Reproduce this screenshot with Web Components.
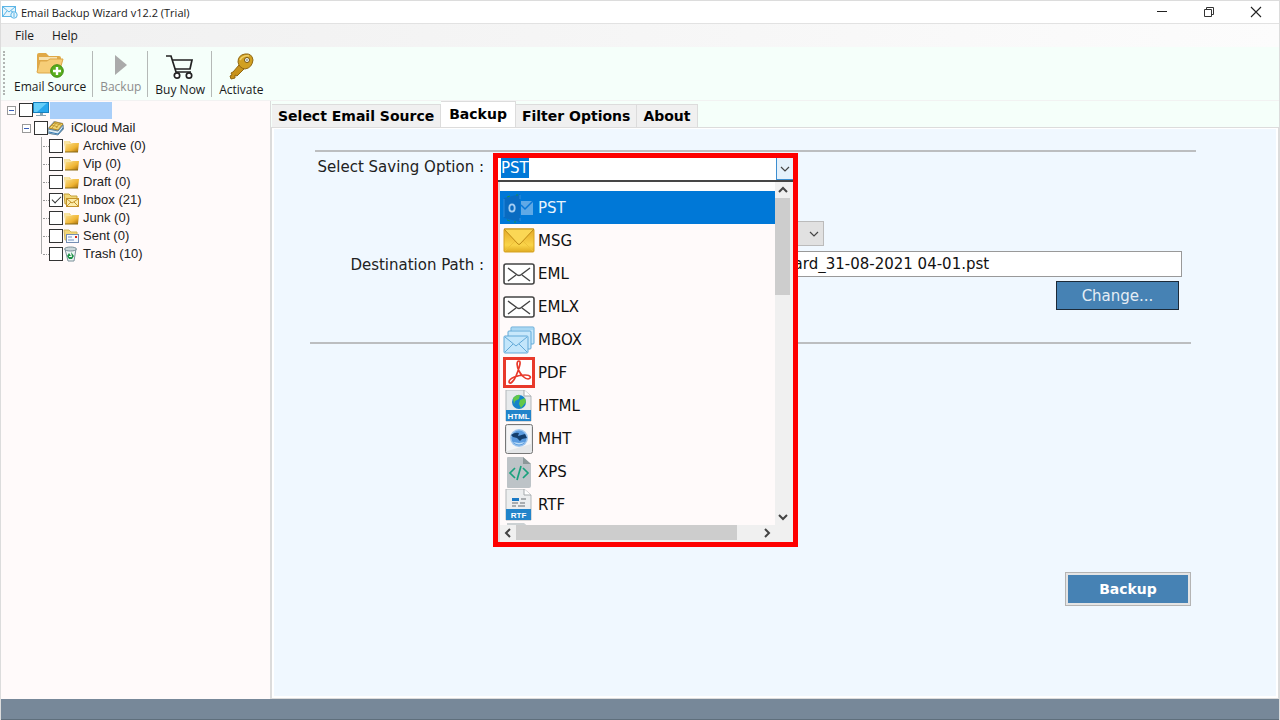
<!DOCTYPE html>
<html lang="en">
<head>
<meta charset="utf-8">
<title>Email Backup Wizard v12.2 (Trial)</title>
<style>
    body {
        margin: 0;
        font-family: "Open Sans", "Noto Sans", sans-serif;
        font-size: 12px;
        color: #1a1a1a;
    }
</style>
</head>
<body>
<backup-app></backup-app>

<script>
const envelope = `<rect x="1" y="6" width="30" height="20" rx="2" fill="#fff" stroke="#444" stroke-width="1.6"/>
    <path d="M5 10l8 6q3 3 6 0l8-6M5 23l8-6M27 23l-8-6" fill="none" stroke="#444" stroke-width="1.4"/>`;
const folder = `<path d="M1 3h5l2 2h7v9H3z" fill="#e9b63c"/><path d="M1 3h5l1 2h7v2L2 13z" fill="#f8e3a0"/>
    <path d="M2 14l1-8h5l2-1h6l-1 9z" fill="url(#fg)"/><path d="M2 14h13" stroke="#8b6a14"/>
    <defs><linearGradient id="fg" x1="0" y1="0" x2="1" y2="1"><stop offset="0" stop-color="#fbe08c"/><stop offset=".6" stop-color="#efb433"/><stop offset="1" stop-color="#a36c0c"/></linearGradient></defs>`;

const ICONS = {
    app: `<svg viewBox="0 0 16 14"><rect x=".5" y="1.5" width="13" height="10" fill="#e6f5fd" stroke="#5bb5e6"/><path d="M1 2l6 5 6-5M1 11l4-5M13 8L9 6" fill="none" stroke="#5bb5e6"/><circle cx="12" cy="10" r="3.2" fill="#e6f5fd" stroke="#5bb5e6"/><path d="M12 8v4" stroke="#5bb5e6"/></svg>`,
    source: `<svg viewBox="0 0 28 28"><path d="M1 4q0-2 2-2h7l3 3h10q2 0 2 2v15H3q-2 0-2-2z" fill="#e0a947"/><path d="M3 6h18v3H3z" fill="#f7e2af"/><path d="M1 21l3-11h7l3-2h13l-4 14H3q-2 0-2-1z" fill="#f6cd77" stroke="#dda748"/><circle cx="21" cy="20" r="6.3" fill="#58ad1c" stroke="#3f8d12"/><path d="M21 16v8M17 20h8" stroke="#fff" stroke-width="2.4"/></svg>`,
    play: `<svg viewBox="0 0 28 28"><path d="M8 4l12 10L8 24z" fill="#aaa"/></svg>`,
    cart: `<svg viewBox="0 0 28 28"><path d="M0 3h5l5 16h15" fill="none" stroke="#222" stroke-width="1.7"/><path d="M6 7h20l-2 9H9" fill="none" stroke="#222" stroke-width="1.7"/><circle cx="11" cy="22.5" r="2.7" fill="#fff" stroke="#222" stroke-width="1.7"/><circle cx="23" cy="22.5" r="2.7" fill="#fff" stroke="#222" stroke-width="1.7"/></svg>`,
    key: `<svg viewBox="0 0 28 28"><path d="M12 12l5 4-7 7-2-1v3l-4 1-1-3 2-1-1-2 2-1z" fill="#c8931b" stroke="#916711"/><path d="M11 9q0-7 7-8 7-1 8 6-1 8-8 9-6-1-7-7z" fill="#d1a021" stroke="#916711"/><path d="M13 7q3-5 9-4" fill="none" stroke="#efcf68" stroke-width="1.5"/><circle cx="20" cy="7" r="2.5" fill="#f5fffa" stroke="#76520c"/><circle cx="20" cy="7" r="1" fill="#999"/></svg>`,
    computer: `<svg viewBox="0 0 16 16"><rect x=".5" y=".5" width="15" height="10" fill="#2aa8ed" stroke="#1680be"/><path d="M1 1h13L4 10H1z" fill="#66cdf8"/><path d="M7 11h3v2H7zM3 13h10v1H3z" fill="#8aa4b2"/></svg>`,
    mail: `<svg viewBox="0 0 16 16"><path d="M0 8l6-7 9 2 1 6-6 6-9-1z" fill="#8b9696"/><path d="M1 8l6-6 8 2-5 6z" fill="#f2d675" stroke="#b58b24"/><path d="M4 5l6 2M6 3l7 2M9 2l-5 6M12 3L8 8" stroke="#c39c35" fill="none"/><path d="M0 9l10 2 5-6v4l-5 6-10-2z" fill="#dceaf2" stroke="#6387a0"/><path d="M1 12l9 2 5-6" fill="none" stroke="#3478b0"/></svg>`,
    folder: `<svg viewBox="0 0 16 16">${folder}</svg>`,
    inbox: `<svg viewBox="0 0 16 16"><path d="M1 2h5l2 2h6v8H2z" fill="#f2d777" stroke="#c5a13b"/><rect x="3.5" y="6.5" width="12" height="8" fill="#fcecaa" stroke="#c3912b"/><path d="M4 7l5 4 6-4M4 14l4-4M15 14l-4-4" fill="none" stroke="#c3912b"/></svg>`,
    sent: `<svg viewBox="0 0 16 16"><path d="M1 2h5l2 2h6v8H2z" fill="#f2d777" stroke="#d1b75d"/><rect x="3.5" y="6.5" width="12" height="8" fill="#f5faff" stroke="#758eb3"/><path d="M5 9h4M5 12h6" stroke="#7391c2"/><path d="M12 8h2v2h-2z" fill="#d52717"/></svg>`,
    trash: `<svg viewBox="0 0 16 16"><path d="M2 3h11l-2 12H5z" fill="#eff5f5" stroke="#7a9099"/><ellipse cx="7.5" cy="3" rx="6" ry="2" fill="#cbd7da" stroke="#7a9099"/><path d="M8 6l3 4-2 3H6l-2-3 2-3 2 3H6v1h3z" fill="#1e9245"/></svg>`,
    pst: `<svg viewBox="0 0 32 32"><path d="M1 6l16-4v28L1 26z" fill="#096bc1"/><path d="M4 5l3-1M13 3h2M4 28l3 1M11 30h2" stroke="#19934b"/><path d="M1 7v18M17 3v4M17 26v3" stroke="#2c8bdd"/><ellipse cx="9" cy="16" rx="2.7" ry="3.7" fill="none" stroke="#a4cdf2" stroke-width="1.8"/><path d="M18 9h12v14H18z" fill="#5fa9e6"/><path d="M18 13l4 4 8-8" fill="none" stroke="#0878d7" stroke-width="1.5"/></svg>`,
    msg: `<svg viewBox="0 0 32 32"><defs><linearGradient id="mg" x1="0" y1="0" x2="0" y2="1"><stop offset="0" stop-color="#e5a928"/><stop offset=".7" stop-color="#fad449"/><stop offset="1" stop-color="#e0ab21"/></linearGradient></defs><rect x="1" y="4" width="30" height="23" rx="1" fill="url(#mg)" stroke="#d7a321"/><path d="M2 26l10-10M30 26L20 16" stroke="#eec13a"/><path d="M1 4h30L17 19q-1 1-2 0z" fill="#fbd755" stroke="#bd8a15"/></svg>`,
    eml: `<svg viewBox="0 0 32 32">${envelope}</svg>`,
    mbox: `<svg viewBox="0 0 32 32"><g stroke="#62a9d7"><rect x="8" y="3" width="23" height="17" rx="1" fill="#c8e8fb"/><path d="M8 5h23" stroke="#8bc7eb"/><rect x="5" y="7" width="23" height="18" rx="1" fill="#c8e8fb"/><rect x="1" y="12" width="24" height="17" rx="1" fill="#c3e6fb"/><path d="M2 13l11 9 11-9M2 28l8-8M24 28l-8-8" fill="none"/></g></svg>`,
    pdf: `<svg viewBox="0 0 32 32"><rect x="1.5" y="1.5" width="29" height="28" fill="#fff" stroke="#e83a2b" stroke-width="3"/><path d="M16 4c-3 0-2 6 0 10 2 4 6 8 9 8 4-1 3-4-3-4-7 0-16 3-16 7 1 3 5-1 7-6 2-5 6-15 3-15z" fill="none" stroke="#e83a2b" stroke-width="1.7"/></svg>`,
    html: `<svg viewBox="0 0 32 32"><path d="M3 0h18l7 6v25H3z" fill="#e7eaec" stroke="#b3b7ba"/><path d="M21 0v6h7" fill="#fff" stroke="#a5aaad"/><circle cx="16" cy="12" r="7" fill="#1683c8"/><path d="M10 8q4-4 7-3l-1 4-4 2-1 3zM17 10l5-2 1 4-5 6-2-4z" fill="#62c848"/><path d="M3 20h25v11H3z" fill="#2284ca"/><text x="15.5" y="29" text-anchor="middle" font-family="Liberation Sans" font-size="8" font-weight="bold" fill="#fff">HTML</text></svg>`,
    mht: `<svg viewBox="0 0 32 32"><rect x="2.5" y="1.5" width="27" height="29" rx="2" fill="#e4e6e8" stroke="#777"/><path d="M4 3h24v18L4 28z" fill="#f5f5f6"/><circle cx="16" cy="15" r="9" fill="#9dc5ed"/><circle cx="16" cy="15" r="7.5" fill="#5a9bdf"/><path d="M8 12q4-3 8-2l-1 3 7-2 2 4-5 1-2 2-3-3-4-1z" fill="#143e6c"/><path d="M10 19q6 5 12 0l-6 1z" fill="#bcddf8"/></svg>`,
    xps: `<svg viewBox="0 0 32 32"><path d="M5 1h15l8 7v22q0 2-2 2H5q-1 0-1-1V2q0-1 1-1z" fill="#bdc3c7"/><path d="M20 1l8 7h-8z" fill="#8b9899"/><path d="M12 12l-5 5 5 5M20 12l5 5-5 5M18 10l-4 14" fill="none" stroke="#1aa17d" stroke-width="1.7"/></svg>`,
    rtf: `<svg viewBox="0 0 32 32"><path d="M3 0h18l7 6v25H3z" fill="#eceeef" stroke="#b3b7ba"/><path d="M21 0v6h7" fill="#fff" stroke="#a5aaad"/><path d="M9 9h7v3H9z" fill="#1878c5"/><path d="M18 10h5M9 14h6M17 14h5M9 17h4M15 17h7" stroke="#a9adb0" stroke-width="2"/><path d="M3 20h25v11H3z" fill="#2284ca"/><text x="15.5" y="29" text-anchor="middle" font-family="Liberation Sans" font-size="8" font-weight="bold" fill="#fff">RTF</text></svg>`,
    doc: `<svg viewBox="0 0 32 32"><path d="M4 1h17l7 6v25H4z" fill="#ccd1d3"/></svg>`,
    up: `<svg viewBox="0 0 16 16"><path d="M4 10l4-4 4 4" fill="none" stroke="currentColor" stroke-width="2"/></svg>`,
    down: `<svg viewBox="0 0 16 16"><path d="M4 6l4 4 4-4" fill="none" stroke="currentColor" stroke-width="2"/></svg>`,
    left: `<svg viewBox="0 0 16 16"><path d="M10 4L6 8l4 4" fill="none" stroke="currentColor" stroke-width="2"/></svg>`,
    right: `<svg viewBox="0 0 16 16"><path d="M6 4l4 4-4 4" fill="none" stroke="currentColor" stroke-width="2"/></svg>`,
    chevron: `<svg viewBox="0 0 16 16"><path d="M4 6l4 4 4-4" fill="none" stroke="#444" stroke-width="1.2"/></svg>`,
    minimize: `<svg viewBox="0 0 16 16"><path d="M3 7.5h10" stroke="#222"/></svg>`,
    restore: `<svg viewBox="0 0 16 16"><path d="M3.5 5.5h7v7h-7zM5.5 5.5v-2h7v7h-2" fill="none" stroke="#333"/></svg>`,
    close: `<svg viewBox="0 0 16 16"><path d="M3 3l10 10M13 3L3 13" stroke="#222" stroke-width="1.1"/></svg>`
};

class UiIcon extends HTMLElement {
    constructor() {
        super();
        this.attachShadow({ mode: 'open' });
    }

    connectedCallback() {
        this.shadowRoot.innerHTML = `
            <style>
                :host { display: block; flex: none; width: 16px; height: 16px; }
                svg { display: block; width: 100%; height: 100%; }
            </style>
            ${ICONS[this.getAttribute('name')] || ''}
        `;
    }
}

class TitleBar extends HTMLElement {
    constructor() {
        super();
        this.attachShadow({ mode: 'open' });
    }

    connectedCallback() {
        this.shadowRoot.innerHTML = `
            <style>
                :host {
                    display: flex;
                    align-items: center;
                    height: 22px;
                    background: #fff;
                    border-top: 1px solid #dcdcdc;
                    border-bottom: 1px solid #e2e2e2;
                    font-size: 11px;
                }
                .name { flex: 1; padding-left: 3px; }
                ui-icon { margin-left: 1px; }
                button {
                    display: grid;
                    place-items: center;
                    width: 47px;
                    height: 22px;
                    padding: 0;
                    border: 0;
                    background: none;
                }
                button ui-icon { margin: 0; }
            </style>
            <ui-icon name="app"></ui-icon>
            <span class="name"><slot></slot></span>
            <button aria-label="Minimize"><ui-icon name="minimize"></ui-icon></button>
            <button aria-label="Restore"><ui-icon name="restore"></ui-icon></button>
            <button aria-label="Close"><ui-icon name="close"></ui-icon></button>
        `;
    }
}

class MenuBar extends HTMLElement {
    constructor() {
        super();
        this.attachShadow({ mode: 'open' });
    }

    connectedCallback() {
        const items = this.getAttribute('items').split(',');
        this.shadowRoot.innerHTML = `
            <style>
                :host {
                    display: flex;
                    gap: 18px;
                    height: 23px;
                    padding-left: 14px;
                    background: linear-gradient(90deg, #f0f0f0, #fcfcfc);
                }
                button { padding: 0; border: 0; background: none; font: inherit; color: inherit; }
            </style>
            ${items.map(item => `<button>${item}</button>`).join('')}
        `;
    }
}

class ToolButton extends HTMLElement {
    constructor() {
        super();
        this.attachShadow({ mode: 'open' });
    }

    connectedCallback() {
        const disabled = this.hasAttribute('disabled');
        this.shadowRoot.innerHTML = `
            <style>
                :host { display: block; padding: 0 6px 0 7px; border-right: 1px solid #b5b9b7; height: 46px; }
                :host(:last-of-type) { border: 0; }
                button {
                    display: flex;
                    flex-direction: column;
                    align-items: center;
                    padding: 0;
                    border: 0;
                    background: none;
                    font: inherit;
                    line-height: 16px;
                    color: inherit;
                    white-space: nowrap;
                }
                button:disabled { color: #8c8c8c; }
                ui-icon { width: 28px; height: 28px; }
                :host([tall]) ui-icon { padding: 2px 0 1px; }
            </style>
            <button ${disabled ? 'disabled' : ''}>
                <ui-icon name="${this.getAttribute('icon')}"></ui-icon>
                <slot></slot>
            </button>
        `;
    }
}

class ToolBar extends HTMLElement {
    constructor() {
        super();
        this.attachShadow({ mode: 'open' });
    }

    connectedCallback() {
        this.shadowRoot.innerHTML = `
            <style>
                :host {
                    display: flex;
                    align-items: flex-start;
                    height: 49px;
                    padding: 4px 0 0 2px;
                    background: #f5fffa;
                    border-bottom: 1px solid #f2f2f2;
                }
                .grip { width: 2px; height: 44px; border-left: 2px dotted #b0b5b2; }
            </style>
            <span class="grip"></span>
            <slot></slot>
        `;
    }
}

class TreeRow extends HTMLElement {
    constructor() {
        super();
        this.attachShadow({ mode: 'open' });
    }

    connectedCallback() {
        const level = this.getAttribute('level');
        const id = 'row-' + this.getAttribute('icon');
        this.shadowRoot.innerHTML = `
            <style>
                :host {
                    display: flex;
                    align-items: center;
                    height: 18px;
                    padding-left: ${[6, 21, 42][level]}px;
                    font: 13px/18px "Liberation Sans", Arial, sans-serif;
                    color: #222;
                }
                .toggle {
                    display: grid;
                    place-items: center;
                    width: 9px;
                    height: 9px;
                    padding: 0;
                    margin-right: 3px;
                    border: 1px solid #999;
                    background: #fff;
                }
                .toggle::before { content: ""; width: 5px; height: 1px; background: #3a5db8; }
                .line { width: 6px; border-top: 1px dotted #999; }
                input {
                    appearance: none;
                    flex: none;
                    display: grid;
                    place-items: center;
                    width: 14px;
                    height: 14px;
                    margin: 0;
                    border: 1px solid #333;
                    background: #fff;
                }
                input:checked::before {
                    content: "";
                    width: 8px;
                    height: 4px;
                    margin-bottom: 3px;
                    border: solid #333;
                    border-width: 0 0 1px 1px;
                    rotate: -45deg;
                }
                label { padding-left: ${[2, 7, 4][level]}px; white-space: nowrap; }
                .account { width: 62px; height: 17px; margin-left: 1px; padding: 0; background: #a9cff9; }
            </style>
            ${level < 2 ? '<button class="toggle" aria-label="Collapse"></button>' : '<span class="line"></span>'}
            <input type="checkbox" id="${id}" ${this.hasAttribute('checked') ? 'checked' : ''}>
            <ui-icon name="${this.getAttribute('icon')}"></ui-icon>
            <label for="${id}" class="${level === '0' ? 'account' : ''}"><slot></slot></label>
        `;
    }
}

class SourceTree extends HTMLElement {
    constructor() {
        super();
        this.attachShadow({ mode: 'open' });
    }

    connectedCallback() {
        this.shadowRoot.innerHTML = `
            <style>
                :host { display: block; background: #fffafa; border-right: 1px solid #dcdcdc; }
                .leaves {
                    background: linear-gradient(#aaa, #aaa) 40px 0 / 1px 117px no-repeat;
                }
            </style>
            <tree-row level="0" icon="computer"></tree-row>
            <tree-row level="1" icon="mail">iCloud Mail</tree-row>
            <div class="leaves">
                <tree-row level="2" icon="folder">Archive (0)</tree-row>
                <tree-row level="2" icon="folder">Vip (0)</tree-row>
                <tree-row level="2" icon="folder">Draft (0)</tree-row>
                <tree-row level="2" icon="inbox" checked>Inbox (21)</tree-row>
                <tree-row level="2" icon="folder">Junk (0)</tree-row>
                <tree-row level="2" icon="sent">Sent (0)</tree-row>
                <tree-row level="2" icon="trash">Trash (10)</tree-row>
            </div>
        `;
    }
}

class TabStrip extends HTMLElement {
    constructor() {
        super();
        this.attachShadow({ mode: 'open' });
    }

    connectedCallback() {
        const active = this.getAttribute('active');
        const tabs = this.getAttribute('tabs').split(',');
        this.shadowRoot.innerHTML = `
            <style>
                :host {
                    display: flex;
                    align-items: flex-end;
                    height: 26px;
                    padding-left: 1px;
                    background: #f5fffa;
                }
                button {
                    height: 23px;
                    padding: 0 6px;
                    border: 1px solid #dcdcdc;
                    border-width: 1px 1px 0 0;
                    background: #f0f0f0;
                    font: bold 14px/20px "DejaVu Sans", Verdana, sans-serif;
                    color: #000;
                    white-space: nowrap;
                }
                button[aria-selected="true"] { height: 26px; padding: 0 8px 2px; background: #fff; }
            </style>
            ${tabs.map(tab => `<button role="tab" aria-selected="${tab === active}">${tab}</button>`).join('')}
        `;
    }
}

class ScrollTrack extends HTMLElement {
    constructor() {
        super();
        this.attachShadow({ mode: 'open' });
    }

    connectedCallback() {
        const across = this.hasAttribute('horizontal');
        this.shadowRoot.innerHTML = `
            <style>
                :host { display: flex; flex-direction: ${across ? 'row' : 'column'}; background: #f0f0f0; color: #444; }
                .thumb { flex: none; background: #cdcdcd; ${across ? 'width: 221px; height: 15px' : 'width: 15px; height: 97px'}; }
                .rest { flex: 1; }
            </style>
            <ui-icon name="${across ? 'left' : 'up'}"></ui-icon>
            <span class="thumb"></span>
            <span class="rest"></span>
            <ui-icon name="${across ? 'right' : 'down'}"></ui-icon>
        `;
    }
}

class FormatItem extends HTMLElement {
    constructor() {
        super();
        this.attachShadow({ mode: 'open' });
    }

    connectedCallback() {
        this.setAttribute('role', 'option');
        this.shadowRoot.innerHTML = `
            <style>
                :host {
                    display: flex;
                    align-items: center;
                    gap: 3px;
                    height: 33px;
                    padding-left: 3px;
                }
                :host([aria-selected="true"]) { background: #0078d7; color: #e8f3fc; }
                ui-icon { width: 32px; height: 32px; }
            </style>
            <ui-icon name="${this.getAttribute('icon')}"></ui-icon>
            <slot></slot>
        `;
    }
}

class FormatPicker extends HTMLElement {
    constructor() {
        super();
        this.attachShadow({ mode: 'open', delegatesFocus: true });
    }

    connectedCallback() {
        this.shadowRoot.innerHTML = `
            <style>
                :host { display: block; position: relative; height: 28px; }
                /* the open list lies over the rows below it */
                .popup {
                    position: absolute;
                    top: 0;
                    left: 0;
                    z-index: 1;
                    width: 295px;
                    border: 5px solid #fe0000;
                    background: #fdfdfd;
                    font: 15px/20px "DejaVu Sans", Verdana, sans-serif;
                    color: #111;
                }
                .field { display: flex; height: 22px; border-bottom: 2px solid #444; background: #fff; }
                input {
                    flex: 1;
                    min-width: 0;
                    padding: 0 0 3px 3px;
                    border: 0;
                    outline: 0;
                    font: inherit;
                    color: inherit;
                    caret-color: transparent;
                }
                input::selection { background: #0078d7; color: #fff; }
                .open {
                    display: grid;
                    place-items: center;
                    width: 17px;
                    padding: 0;
                    border: 1px solid #3c8ed0;
                    border-width: 0 0 1px 1px;
                    background: #e5f1fb;
                }
                .drop { display: grid; grid-template-columns: 1fr 18px; border-left: 2px solid #dcdcdc; }
                .list { height: 334px; margin-top: 9px; overflow: hidden; background: #fffafa; }
                .corner { background: #f0f0f0; }
                scroll-track[horizontal] { height: 17px; }
            </style>
            <div class="popup">
                <div class="field">
                    <input id="format" role="combobox" aria-label="Select Saving Option" aria-expanded="true" value="PST">
                    <button class="open" aria-label="Open"><ui-icon name="chevron"></ui-icon></button>
                </div>
                <div class="drop">
                    <div class="list" role="listbox"><slot></slot></div>
                    <scroll-track></scroll-track>
                    <scroll-track horizontal></scroll-track>
                    <span class="corner"></span>
                </div>
            </div>
        `;
        const input = this.shadowRoot.getElementById('format');
        input.focus();
        input.select();
    }
}

class BackupForm extends HTMLElement {
    constructor() {
        super();
        this.attachShadow({ mode: 'open' });
    }

    connectedCallback() {
        this.shadowRoot.innerHTML = `
            <style>
                :host {
                    display: block;
                    padding: 21px 85px 24px 36px;
                    border: 3px solid #fff;
                    border-top-width: 2px;
                    outline: 1px solid #dcdcdc;
                    outline-offset: -1px;
                    background: #f0f8ff;
                    font: 15px/20px "DejaVu Sans", Verdana, sans-serif;
                    color: #222;
                }
                hr { height: 2px; margin: 0; border: 0; background: #bcbec0; }
                .top { margin: 0 -5px 1px 5px; }
                .fields {
                    display: grid;
                    grid-template-columns: 174px 1fr;
                    column-gap: 9px;
                    padding-bottom: 32px;
                }
                .fields > label { padding-top: 4px; text-align: right; white-space: nowrap; }
                select, .path {
                    box-sizing: border-box;
                    margin-left: 7px;
                    border: 1px solid #999;
                    border-radius: 0;
                    font: inherit;
                    color: #111;
                }
                .kind { position: relative; grid-column: 2; width: 331px; margin: 40px 0 5px; }
                select { appearance: none; width: 324px; height: 25px; background: #e1e1e1; border-color: #bbb; }
                .kind ui-icon { position: absolute; right: 2px; top: 5px; }
                .path { height: 26px; padding: 0 0 0 266px; margin-right: 9px; background: #fff; }
                .change {
                    grid-column: 2;
                    justify-self: end;
                    width: 123px;
                    height: 29px;
                    margin: 4px 12px 0 0;
                    border: 1px solid #1c2a38;
                    background: #4682b4;
                    font: inherit;
                    color: #e4edf5;
                }
                .run {
                    display: block;
                    width: 126px;
                    height: 34px;
                    margin: 228px 0 0 auto;
                    border: 1px solid #b4b4b4;
                    box-shadow: inset 0 0 0 2px #e4e4e4;
                    background: #4682b4;
                    font: inherit;
                    font-size: 14px;
                    font-weight: bold;
                    color: #fff;
                }
            </style>
            <hr class="top">
            <div class="fields">
                <label for="picker">Select Saving Option :</label>
                <format-picker id="picker">
                    <format-item icon="pst" aria-selected="true">PST</format-item>
                    <format-item icon="msg">MSG</format-item>
                    <format-item icon="eml">EML</format-item>
                    <format-item icon="eml">EMLX</format-item>
                    <format-item icon="mbox">MBOX</format-item>
                    <format-item icon="pdf">PDF</format-item>
                    <format-item icon="html">HTML</format-item>
                    <format-item icon="mht">MHT</format-item>
                    <format-item icon="xps">XPS</format-item>
                    <format-item icon="rtf">RTF</format-item>
                    <format-item icon="doc"></format-item>
                </format-picker>
                <div class="kind">
                    <select aria-label="Saving detail"></select>
                    <ui-icon name="chevron"></ui-icon>
                </div>
                <label for="path">Destination Path :</label>
                <input class="path" id="path" value="Wizard_31-08-2021 04-01.pst">
                <button class="change">Change...</button>
            </div>
            <hr>
            <button class="run">Backup</button>
        `;
    }
}

class BackupApp extends HTMLElement {
    constructor() {
        super();
        this.attachShadow({ mode: 'open' });
    }

    connectedCallback() {
        this.shadowRoot.innerHTML = `
            <style>
                :host {
                    box-sizing: border-box;
                    display: flex;
                    flex-direction: column;
                    min-height: 100vh;
                    border: 1px solid #dcdcdc;
                    border-width: 0 1px 0 1px;
                }
                main { flex: 1; display: grid; grid-template-columns: 270px 1fr; }
                section { display: flex; flex-direction: column; }
                backup-form { flex: 1; }
                footer { height: 20px; background: #778899; border-bottom: 1px solid #5f6f7c; }
            </style>
            <title-bar>Email Backup Wizard v12.2 (Trial)</title-bar>
            <menu-bar items="File,Help"></menu-bar>
            <tool-bar>
                <tool-button icon="source">Email Source</tool-button>
                <tool-button icon="play" disabled>Backup</tool-button>
                <tool-button icon="cart" tall>Buy Now</tool-button>
                <tool-button icon="key" tall>Activate</tool-button>
            </tool-bar>
            <main>
                <source-tree></source-tree>
                <section>
                    <tab-strip tabs="Select Email Source,Backup,Filter Options,About" active="Backup"></tab-strip>
                    <backup-form></backup-form>
                </section>
            </main>
            <footer></footer>
        `;
    }
}

customElements.define('ui-icon', UiIcon);
customElements.define('title-bar', TitleBar);
customElements.define('menu-bar', MenuBar);
customElements.define('tool-button', ToolButton);
customElements.define('tool-bar', ToolBar);
customElements.define('tree-row', TreeRow);
customElements.define('source-tree', SourceTree);
customElements.define('tab-strip', TabStrip);
customElements.define('scroll-track', ScrollTrack);
customElements.define('format-item', FormatItem);
customElements.define('format-picker', FormatPicker);
customElements.define('backup-form', BackupForm);
customElements.define('backup-app', BackupApp);
</script>
</body>
</html>
